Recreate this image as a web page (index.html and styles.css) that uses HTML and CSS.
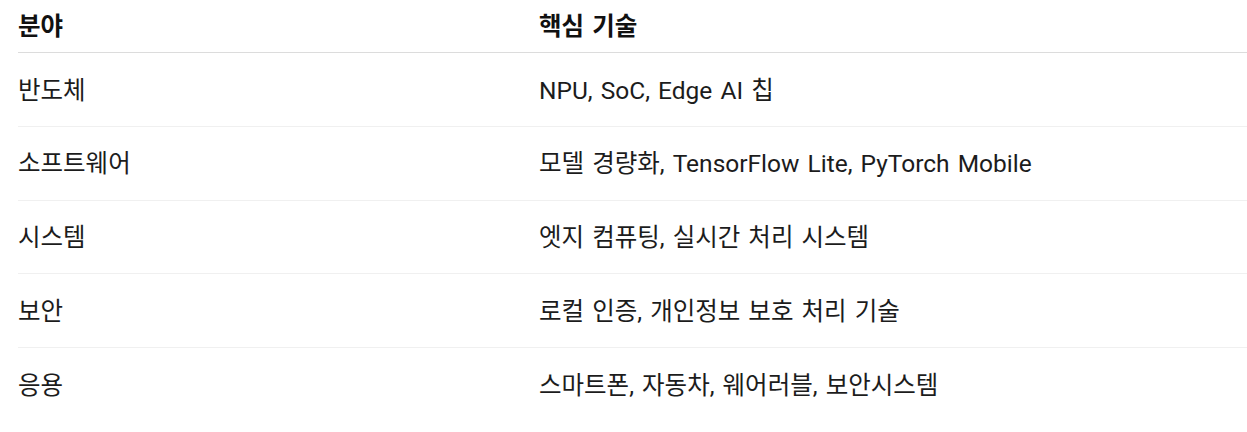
FILE: index.html
```html
<!DOCTYPE html>
<html lang="ko">
<head>
<meta charset="utf-8">
<link rel="stylesheet" href="styles.css">
</head>
<body>
<div class="table">
  <div class="row head">
    <div class="c1">분야</div>
    <div class="c2">핵심 기술</div>
  </div>
  <div class="row">
    <div class="c1">반도체</div>
    <div class="c2">NPU, SoC, Edge AI 칩</div>
  </div>
  <div class="row">
    <div class="c1">소프트웨어</div>
    <div class="c2">모델 경량화, TensorFlow Lite, PyTorch Mobile</div>
  </div>
  <div class="row">
    <div class="c1">시스템</div>
    <div class="c2">엣지 컴퓨팅, 실시간 처리 시스템</div>
  </div>
  <div class="row">
    <div class="c1">보안</div>
    <div class="c2">로컬 인증, 개인정보 보호 처리 기술</div>
  </div>
  <div class="row last">
    <div class="c1">응용</div>
    <div class="c2">스마트폰, 자동차, 웨어러블, 보안시스템</div>
  </div>
</div>
</body>
</html>
```

FILE: styles.css
```css
html, body {
  margin: 0;
  padding: 0;
  background: #fff;
}
body {
  font-family: Roboto, "Noto Sans CJK KR", sans-serif;
  font-size: 24.5px;
  color: #1c1c1c;
  overflow: hidden;
}
.table {
  margin-left: 18px;
  width: 1240px;
}
.row {
  display: grid;
  grid-template-columns: 521px 1fr;
  align-items: center;
  height: 73.75px;
  box-sizing: border-box;
  border-bottom: 1px solid #f0f0f0;
  word-spacing: 2px;
}
.row.head {
  height: 53px;
  font-weight: 700;
  color: #111;
  border-bottom: 1px solid #dcdcdc;
}
.row.last {
  border-bottom: none;
}
.c1, .c2 {
  line-height: 1.2;
  white-space: nowrap;
  padding-top: 2px;
}
```
